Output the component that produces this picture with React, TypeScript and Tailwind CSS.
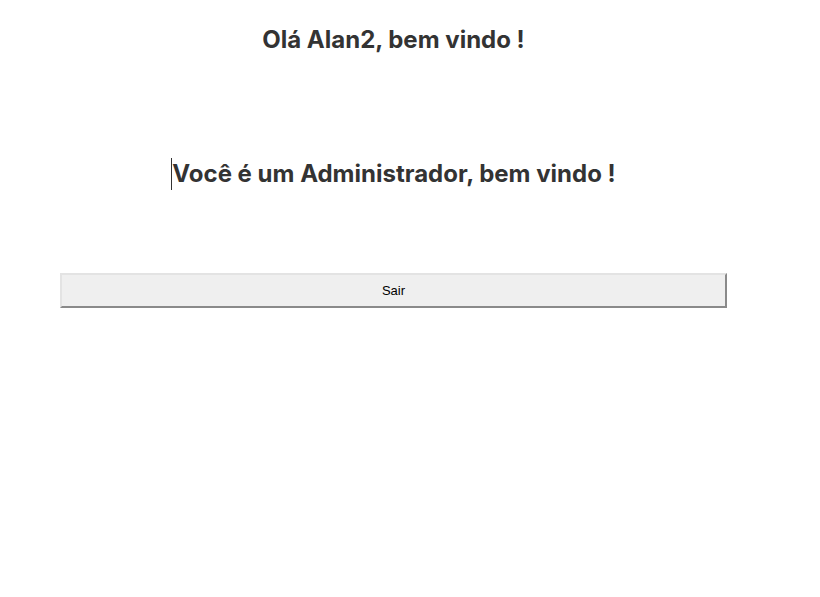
export default function App() {
  return (
    <div className="min-h-[597px] bg-white font-['Inter',sans-serif] text-[#333333]">
      <div className="ml-[60px] flex w-[667px] flex-col items-center pt-[24px]">
        <h1 className="text-2xl leading-8 font-bold">Olá Alan2, bem vindo !</h1>
        <h2 className="mt-[102px] border-l border-[#333333] text-2xl leading-8 font-bold">
          Você é um Administrador, bem vindo !
        </h2>
        <button className="mt-[83px] h-[35px] w-full border-2 border-t-[#e3e3e3] border-l-[#e3e3e3] border-r-[#8a8a8a] border-b-[#8a8a8a] bg-[#efefef] font-['Liberation_Sans',sans-serif] text-[13px] text-black">
          Sair
        </button>
      </div>
    </div>
  );
}
